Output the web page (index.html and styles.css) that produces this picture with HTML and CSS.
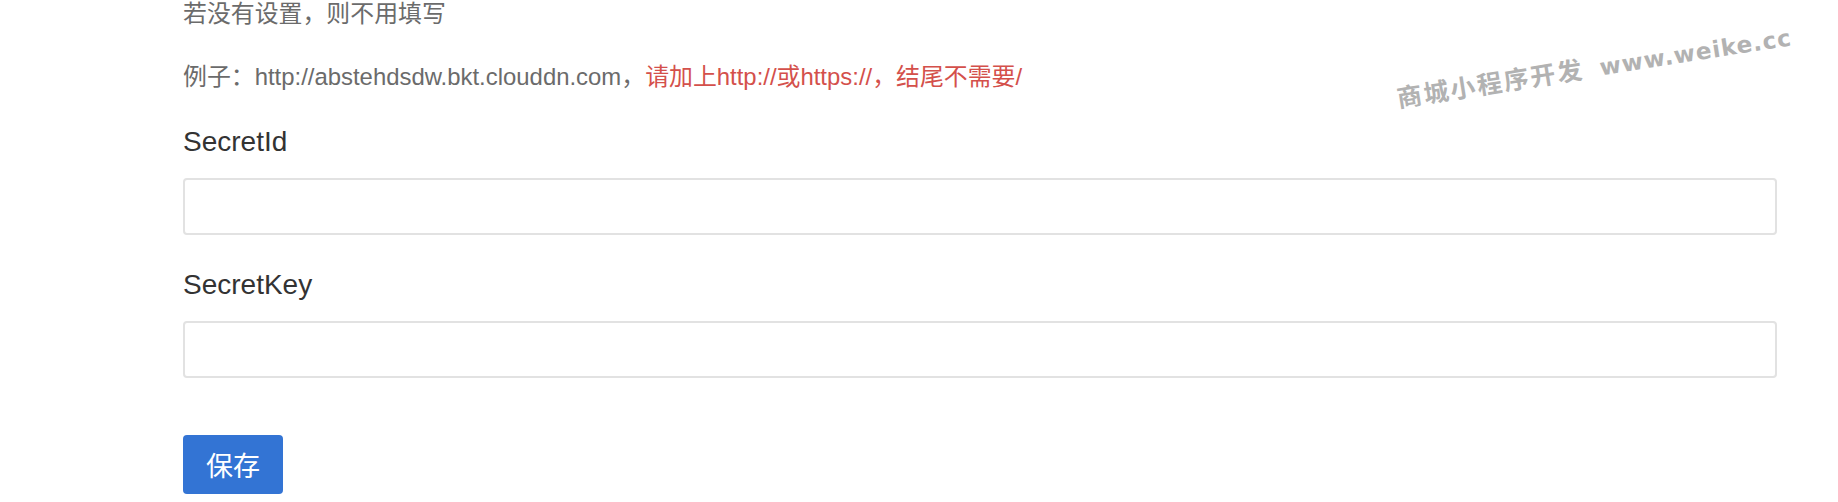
FILE: index.html
```html
<!DOCTYPE html>
<html lang="zh-CN">
  <head>
    <meta charset="UTF-8" />
    <meta name="viewport" content="width=device-width, initial-scale=1" />
    <title>存储设置</title>
    <link rel="stylesheet" href="styles.css">
  </head>
  <body>
    <div class="container">
      <form class="form">
        <p class="help-block first">若没有设置，则不用填写</p>
        <p class="help-block">例子：http://abstehdsdw.bkt.clouddn.com，<span class="text-danger">请加上http://或https://，结尾不需要/</span></p>

        <div class="form-group">
          <label>SecretId</label>
          <input type="text" name="secret_id" />
        </div>

        <div class="form-group">
          <label>SecretKey</label>
          <input type="text" name="secret_key" />
        </div>

        <button type="submit" class="btn-primary">保存</button>
      </form>
    </div>
    <div class="watermark"><span class="wm-cn">商城小程序开发</span><span class="wm-en">www.weike.cc</span></div>
  </body>
</html>
```

FILE: styles.css
```css
body {
  margin: 0;
  padding: 0;
  background-color: #fff;
  font-family: "Liberation Sans", Arial, "Noto Sans CJK SC", sans-serif;
  color: #333;
}
.container {
  padding: 0 61px 0 183px;
}
.help-block {
  margin: 35px 0 0;
  font-size: 23.9px;
  line-height: 28px;
  color: #6b6b6b;
}
.help-block.first {
  margin-top: 0;
}
.text-danger {
  color: #d4504b;
}
.form-group {
  margin-top: 35px;
}
.form-group + .form-group {
  margin-top: 34px;
}
label {
  display: block;
  font-size: 28px;
  line-height: 32px;
  color: #333;
  margin-bottom: 20px;
}
input[type="text"] {
  display: block;
  width: 100%;
  height: 57px;
  border: 2px solid #e2e2e2;
  border-radius: 4px;
  box-sizing: border-box;
  padding: 0 12px;
  font-size: 24px;
}
.btn-primary {
  display: block;
  margin-top: 57px;
  width: 100px;
  height: 59px;
  background-color: #3374d4;
  color: #fff;
  border: none;
  border-radius: 4px;
  font-family: "Noto Sans CJK SC", sans-serif;
  font-size: 27px;
  cursor: pointer;
}
.watermark {
  position: absolute;
  left: 1395px;
  top: 52px;
  width: 404px;
  white-space: nowrap;
  font-family: "DejaVu Sans", "Noto Sans CJK SC", sans-serif;
  font-weight: bold;
  line-height: 32px;
  color: #b2b2b2;
  transform: rotate(-9deg);
}
.wm-cn {
  font-size: 25px;
  letter-spacing: 2px;
  margin-right: 16px;
}
.wm-en {
  font-size: 23px;
  letter-spacing: 1px;
}
```
